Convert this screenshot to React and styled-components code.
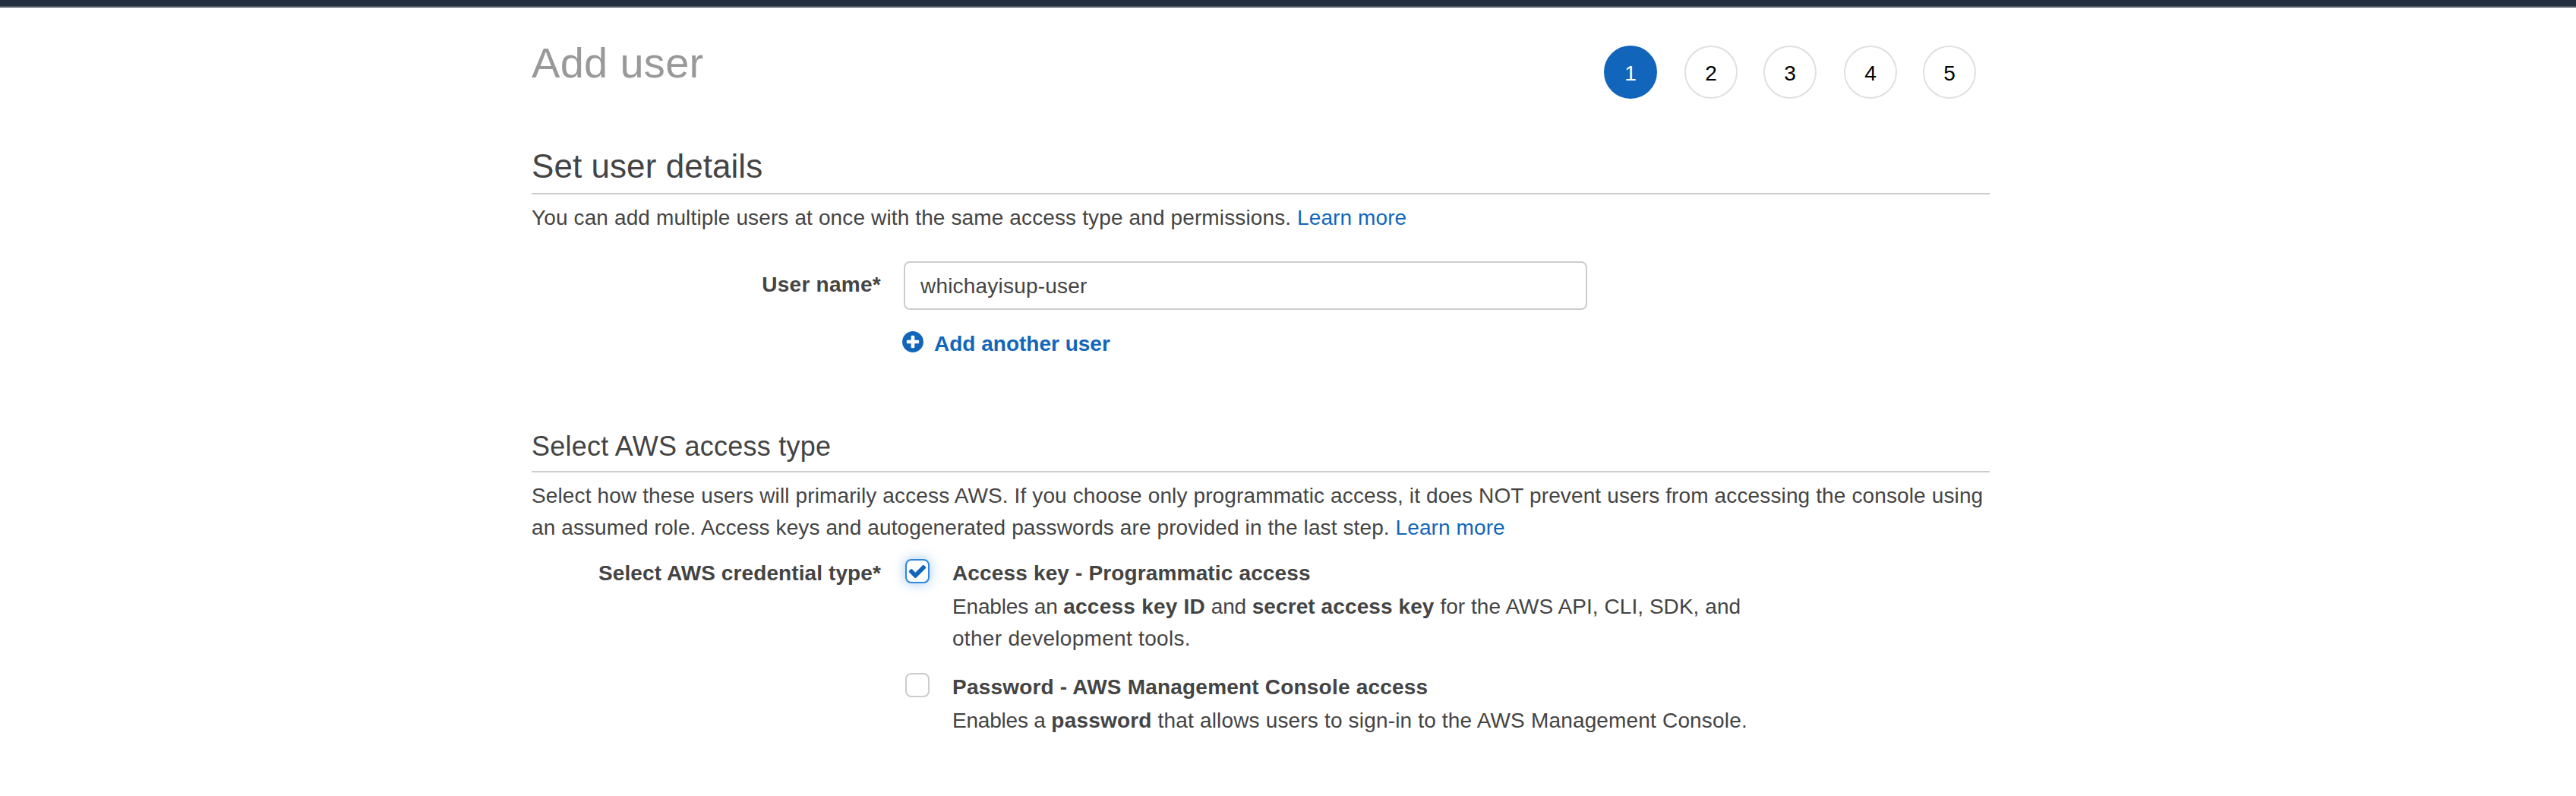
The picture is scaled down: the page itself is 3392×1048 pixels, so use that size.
import React from "react";
import styled, { createGlobalStyle } from "styled-components";

const GlobalStyle = createGlobalStyle`
  * { box-sizing: border-box; }
  body {
    margin: 0;
    background: #fff;
    color: #444;
    font-family: "Liberation Sans", Arial, sans-serif;
    font-size: 28px;
    line-height: 42px;
  }
`;

const TopBar = styled.div`
  height: 10px;
  background: #232f3e;
  border-bottom: 2px solid #545b64;
`;

const Page = styled.main`
  width: 1920px;
  margin-left: 700px;
`;

const Header = styled.header`
  display: flex;
  justify-content: space-between;
  align-items: flex-start;
  height: 170px;
  padding: 40px 18px 0 0;
`;

const Title = styled.h1`
  margin: 0;
  font-size: 56px;
  font-weight: 400;
  line-height: 66px;
  color: #999;
  letter-spacing: 0.3px;
`;

const Steps = styled.ol`
  display: flex;
  gap: 34px;
  margin: 10px 0 0;
  padding: 0;
  list-style: none;
`;

const Step = styled.li`
  width: 70px;
  height: 70px;
  border-radius: 50%;
  border: 2px solid ${(p) => (p.$active ? "#1166bb" : "#e0e0e0")};
  background: ${(p) => (p.$active ? "#1166bb" : "#fff")};
  color: ${(p) => (p.$active ? "#fff" : "#000")};
  line-height: 69px;
  text-align: center;

  &:nth-child(even) {
    margin-left: 2px;
  }
`;

const SectionTitle = styled.h2`
  margin: 0;
  height: ${(p) => (p.$small ? 58 : 76)}px;
  border-bottom: 2px solid #ccc;
  font-size: ${(p) => (p.$small ? 36 : 44)}px;
  font-weight: 400;
  line-height: ${(p) => (p.$small ? 48 : 78)}px;
  letter-spacing: ${(p) => (p.$small ? 0.25 : 0.06)}px;
`;

const Text = styled.span`
  letter-spacing: ${(p) => p.$track || 0}px;
`;

const Strong = styled.strong`
  font-weight: 700;
  letter-spacing: ${(p) => p.$track || 0}px;
`;

const Intro = styled.p`
  margin: 0;
  padding-top: 10px;
  white-space: nowrap;
`;

const Link = styled.a`
  color: #1166bb;
  text-decoration: none;
  letter-spacing: 0.1px;
`;

const Form = styled.div`
  display: grid;
  grid-template-columns: 460px 1fr;
  column-gap: ${(p) => p.$gap}px;
  padding-top: ${(p) => p.$top}px;
`;

const Label = styled.label`
  padding-top: ${(p) => p.$top}px;
  text-align: right;
  font-weight: 700;
  white-space: nowrap;
  letter-spacing: ${(p) => p.$track}px;
`;

const Input = styled.input`
  display: block;
  width: 900px;
  height: 64px;
  padding: 2px 20px 0;
  border: 2px solid #ccc;
  border-radius: 8px;
  background: #fff;
  color: #444;
  font: inherit;
  letter-spacing: 0.2px;
  outline: none;
`;

const AddButton = styled.button`
  display: flex;
  align-items: flex-start;
  gap: 14px;
  margin: 24px 0 0 -2px;
  padding: 0;
  border: 0;
  background: none;
  color: #1166bb;
  font: inherit;
  font-weight: 700;
`;

const PlusIcon = styled.svg`
  width: 28px;
  height: 28px;
  margin-top: 4px;
  fill: currentColor;
`;

const CheckIcon = styled.svg`
  width: 26px;
  height: 26px;
  fill: #1166bb;
`;

const AccessSection = styled.section`
  margin-top: 90px;
`;

const Options = styled.div`
  display: flex;
  flex-direction: column;
  gap: 21px;
`;

const Option = styled.div`
  display: flex;
  gap: 30px;
`;

const Check = styled.span`
  display: grid;
  place-items: center;
  flex: none;
  width: 32px;
  height: 32px;
  margin-top: 3px;
  border: 2px solid ${(p) => (p.$on ? "#2e86e0" : "#ccc")};
  border-radius: 8px;
  background: #fff;
  box-shadow: ${(p) => (p.$on ? "0 0 16px rgba(46, 134, 224, 0.45)" : "none")};
`;

const OptionBody = styled.div`
  padding-top: 1px;
  white-space: nowrap;
`;

const OptionTitle = styled.div`
  height: 44px;
  font-weight: 700;
  letter-spacing: ${(p) => p.$track}px;
`;

export default function App() {
  return (
    <>
      <GlobalStyle />
      <TopBar />
      <Page>
        <Header>
          <Title>Add user</Title>
          <Steps>
            {[1, 2, 3, 4, 5].map((n) => (
              <Step key={n} $active={n === 1}>{n}</Step>
            ))}
          </Steps>
        </Header>
        <section>
          <SectionTitle>Set user details</SectionTitle>
          <Intro>
            <Text $track={0.127}>You can add multiple users at once with the same access type and permissions. </Text>
            <Link href="#">Learn more</Link>
          </Intro>
          <Form $gap={30} $top={36}>
            <Label htmlFor="user-name" $top={10} $track={0.27}>User name*</Label>
            <div>
              <Input id="user-name" defaultValue="whichayisup-user" />
              <AddButton type="button">
                <PlusIcon viewBox="128 128 1536 1536">
                  <path d="M1344 960v-128q0-26-19-45t-45-19h-256v-256q0-26-19-45t-45-19h-128q-26 0-45 19t-19 45v256h-256q-26 0-45 19t-19 45v128q0 26 19 45t45 19h256v256q0 26 19 45t45 19h128q26 0 45-19t19-45v-256h256q26 0 45-19t19-45zm320-64q0 209-103 385.500t-279.500 279.500-385.500 103-385.500-103-279.500-279.500-103-385.500 103-385.500 279.500-279.500 385.500-103 385.500 103 279.500 279.500 103 385.500z" />
                </PlusIcon>
                <Text>Add another user</Text>
              </AddButton>
            </div>
          </Form>
        </section>
        <AccessSection>
          <SectionTitle as="h3" $small>Select AWS access type</SectionTitle>
          <Intro>
            <Text $track={0.128}>Select how these users will primarily access AWS. If you choose only programmatic access, it does NOT prevent users from accessing the console using</Text>
            <br />
            <Text $track={0.104}>an assumed role. Access keys and autogenerated passwords are provided in the last step. </Text>
            <Link href="#">Learn more</Link>
          </Intro>
          <Form $gap={32} $top={17}>
            <Label $top={1} $track={0.1}>Select AWS credential type*</Label>
            <Options>
              <Option>
                <Check $on role="checkbox" aria-checked="true">
                  <CheckIcon viewBox="0 0 1792 1792">
                    <path d="M1671 566q0 40-28 68l-724 724-136 136q-28 28-68 28t-68-28l-136-136-362-362q-28-28-28-68t28-68l136-136q28-28 68-28t68 28l294 295 656-657q28-28 68-28t68 28l136 136q28 28 28 68z" />
                  </CheckIcon>
                </Check>
                <OptionBody>
                  <OptionTitle $track={0.15}>Access key - Programmatic access</OptionTitle>
                  <Text $track={-0.15}>Enables an </Text>
                  <Strong $track={0.24}>access key ID</Strong>
                  <Text $track={-0.15}> and </Text>
                  <Strong $track={0.1}>secret access key</Strong>
                  <Text $track={0.05}> for the AWS API, CLI, SDK, and</Text>
                  <br />
                  <Text $track={0.3}>other development tools.</Text>
                </OptionBody>
              </Option>
              <Option>
                <Check role="checkbox" aria-checked="false" />
                <OptionBody>
                  <OptionTitle $track={0.2}>Password - AWS Management Console access</OptionTitle>
                  <Text $track={-0.2}>Enables a </Text>
                  <Strong $track={0.2}>password</Strong>
                  <Text $track={0.17}> that allows users to sign-in to the AWS Management Console.</Text>
                </OptionBody>
              </Option>
            </Options>
          </Form>
        </AccessSection>
      </Page>
    </>
  );
}
